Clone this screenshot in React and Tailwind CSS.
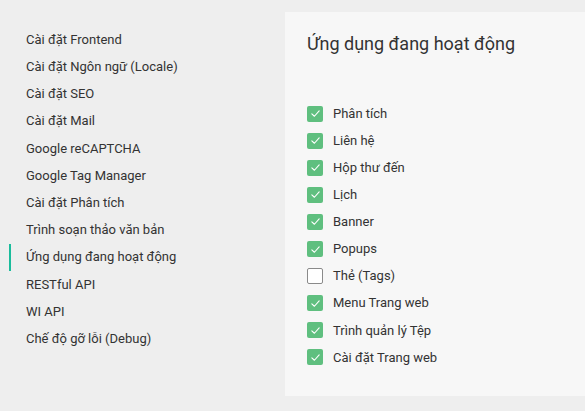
import React from 'react';

const navItems = [
    'Cài đặt Frontend',
    'Cài đặt Ngôn ngữ (Locale)',
    'Cài đặt SEO',
    'Cài đặt Mail',
    'Google reCAPTCHA',
    'Google Tag Manager',
    'Cài đặt Phân tích',
    'Trình soạn thảo văn bản',
    'Ứng dụng đang hoạt động',
    'RESTful API',
    'WI API',
    'Chế độ gỡ lỗi (Debug)',
];

const apps = [
    { label: 'Phân tích', on: true },
    { label: 'Liên hệ', on: true },
    { label: 'Hộp thư đến', on: true },
    { label: 'Lịch', on: true },
    { label: 'Banner', on: true },
    { label: 'Popups', on: true },
    { label: 'Thẻ (Tags)', on: false },
    { label: 'Menu Trang web', on: true },
    { label: 'Trình quản lý Tệp', on: true },
    { label: 'Cài đặt Trang web', on: true },
];

const Checkbox = ({ on }) =>
    on ? (
        <span className="w-4 h-4 rounded-[2px] bg-[#5fbf7f] flex items-center justify-center shrink-0">
            <svg width="11" height="11" viewBox="0 0 12 12" fill="none">
                <path d="M2 6.3 L4.8 9 L10 3.2" stroke="#ffffff" strokeWidth="1.2" strokeLinecap="round" strokeLinejoin="round" />
            </svg>
        </span>
    ) : (
        <span className="w-4 h-4 rounded-[2px] border border-[#8a8a8a] bg-white shrink-0" />
    );

export default function App() {
    return (
        <div className="w-[585px] h-[411px] bg-[#eeeeee] flex overflow-hidden font-['Roboto',sans-serif] text-[#333333]">
            <nav className="w-[285px] shrink-0 pt-[26px]">
                {navItems.map((item, i) => (
                    <div key={i} className="relative h-[27.2px] flex items-center pl-[26px] text-[13px]">
                        {i === 8 && <span className="absolute left-[9px] top-0 bottom-0 w-[2px] bg-[#1abc9c]" />}
                        {item}
                    </div>
                ))}
            </nav>

            <main className="flex-1 mt-[12px] mb-[15px] bg-[#f7f7f7] pl-[22px] pt-[19px]">
                <h2 className="text-[18px] leading-[26px] text-[#333333] mb-[43px]">Ứng dụng đang hoạt động</h2>
                <ul>
                    {apps.map((app, i) => (
                        <li key={i} className="h-[27.1px] flex items-center gap-[10px] text-[13px]">
                            <Checkbox on={app.on} />
                            <span>{app.label}</span>
                        </li>
                    ))}
                </ul>
            </main>
        </div>
    );
}
